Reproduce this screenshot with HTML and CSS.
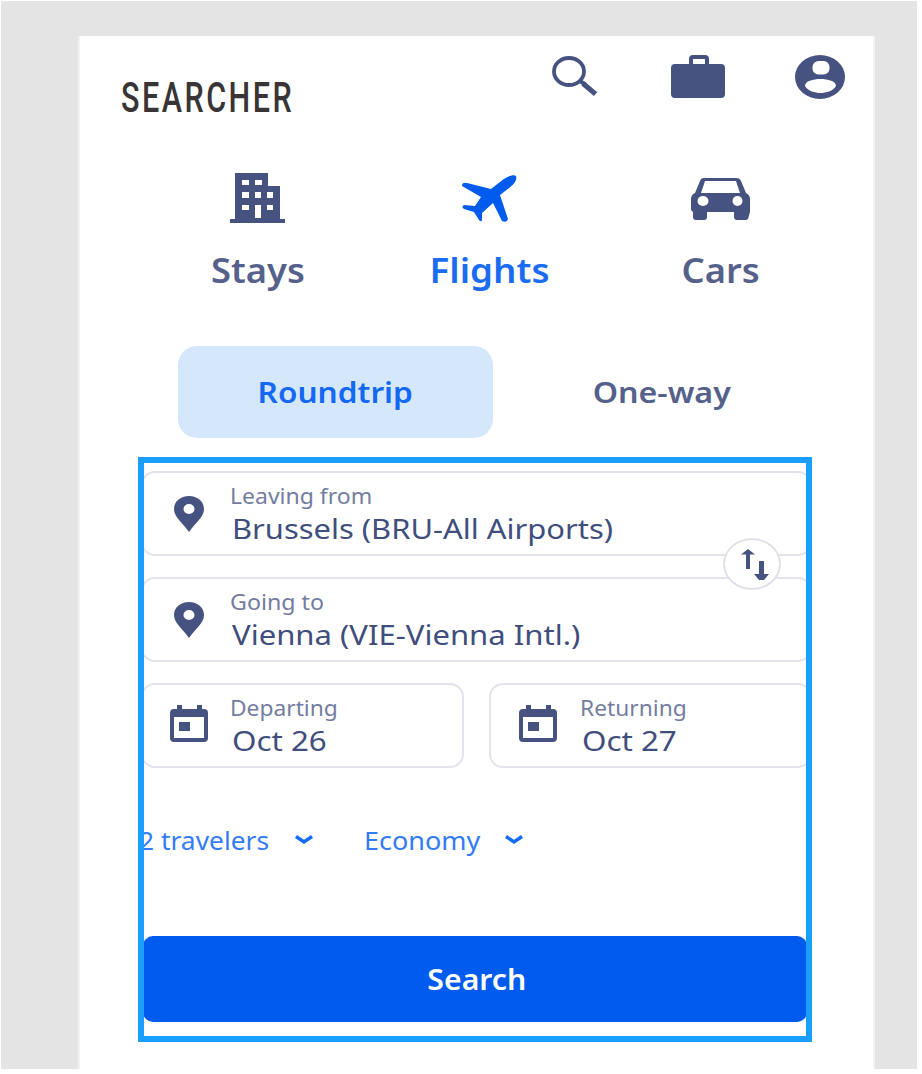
FILE: index.html
```html
<!DOCTYPE html>
<html lang="en">
<head>
<meta charset="utf-8">
<title>Searcher</title>
<link rel="stylesheet" href="styles.css">
</head>
<body>
<div class="canvas">
<main class="card">
  <header class="top">
    <div class="logo"><span>SEARCHER</span></div>
    <nav class="actions">
      <svg class="i-search" viewBox="0 0 45 41" preserveAspectRatio="none" fill="none" stroke="currentColor"><ellipse cx="17" cy="15.500" rx="15" ry="13.500" stroke-width="3.800"/><path d="M28 25l6 4" stroke-width="4"/><path d="M31 27.500l12.500 10.500" stroke-width="5"/></svg>
      <svg class="i-bag" viewBox="0 0 54 43"><path fill="currentColor" fill-rule="evenodd" d="M4 9H18V4Q18 0 22 0H34Q38 0 38 4V9H50Q54 9 54 13V39Q54 43 50 43H4Q0 43 0 39V13Q0 9 4 9ZM22 9H34V4H22Z"/></svg>
      <svg class="i-user" viewBox="0 0 50 44"><ellipse cx="25" cy="22" rx="25" ry="22" fill="currentColor"/><rect x="17.500" y="6" width="17" height="13.500" rx="6" fill="#fff"/><path fill="#fff" d="M10 31C10 26 18 24 25.500 24S41 26 41 31C38 36 31 38 25.500 38S13 36 10 31Z"/></svg>
    </nav>
  </header>
  <nav class="tabs">
    <a class="tab"><span class="pic"><svg width="55" height="53" viewBox="0 0 55 53"><path fill="currentColor" fill-rule="evenodd" d="M5 1H38V14H50V47H55V51H0V47H5ZM12 8V13H19V8ZM25 8V13H32V8ZM12 20V26H19V20ZM25 20V26H31V20ZM37 20V26H43V20ZM12 33V38H19V33ZM37 33V38H43V33ZM25 33V46H31V33Z"/></svg></span><span class="lbl stays">Stays</span></a>
    <a class="tab on"><span class="pic"><svg width="55" height="47" viewBox="0 0 55 47"><path fill="currentColor" d="M54 1C51-1 44 2 38 7L29 14L5 8Q0 7 0 11L19 22L13 31L2 30Q-1 32 2 34L12 37L17 45Q20 48 20 44L20 38L31 28L40 46Q45 48 46 44L38 20L47 13Q56 6 54 1Z"/></svg></span><span class="lbl flights">Flights</span></a>
    <a class="tab"><span class="pic"><svg width="59" height="43" viewBox="0 0 59 43"><path fill="currentColor" fill-rule="evenodd" d="M13 1H45Q49 1 50 4L55 16Q59 18 59 22V35L57 42Q56 43 54 43H46Q43 43 43 40V35H16V40Q16 43 13 43H5Q2 43 2 40V35L0 33V21Q1 17 4 16L9 4Q10 1 13 1ZM14 4L10 16H49L45 4Z"/><ellipse cx="12" cy="24" rx="5.500" ry="5" fill="#fff"/><ellipse cx="46.500" cy="24" rx="5" ry="5" fill="#fff"/></svg></span><span class="lbl cars">Cars</span></a>
  </nav>
  <div class="trip">
    <button class="seg on"><span class="roundtrip">Roundtrip</span></button>
    <button class="seg"><span class="oneway">One-way</span></button>
  </div>
  <section class="frame">
    <div class="form">
      <div class="field">
        <svg class="pin" viewBox="0 0 30 36"><path fill="currentColor" fill-rule="evenodd" d="M15 0C6.500 0 0 5.500 0 13C0 21 8 26 15 36C22 26 30 21 30 13C30 5.500 23.500 0 15 0ZM15 8A5.500 5 0 1 1 15 18A5.500 5 0 1 1 15 8Z"/></svg>
        <div class="txt"><small class="w1">Leaving from</small><b class="w2">Brussels (BRU-All Airports)</b></div>
        <span class="swap"><svg width="30" height="32" viewBox="0 0 30 32" fill="none" stroke="currentColor"><path d="M8 21V3" stroke-width="4"/><path d="M1 6.500L8 1L15 6.500Z" fill="currentColor" stroke="none"/><path d="M21.500 13V27" stroke-width="5"/><path d="M14 26H29L24 32H19Z" fill="currentColor" stroke="none"/></svg></span>
      </div>
      <div class="field">
        <svg class="pin" viewBox="0 0 30 36"><path fill="currentColor" fill-rule="evenodd" d="M15 0C6.500 0 0 5.500 0 13C0 21 8 26 15 36C22 26 30 21 30 13C30 5.500 23.500 0 15 0ZM15 8A5.500 5 0 1 1 15 18A5.500 5 0 1 1 15 8Z"/></svg>
        <div class="txt"><small class="w3">Going to</small><b class="w4">Vienna (VIE-Vienna Intl.)</b></div>
      </div>
      <div class="dates">
        <div class="field">
          <svg class="cal" viewBox="0 0 38 37"><path fill="currentColor" fill-rule="evenodd" d="M4 4H7V0H12V4H27V0H32V4H34Q38 4 38 8V33Q38 37 34 37H4Q0 37 0 33V8Q0 4 4 4ZM4 12V33H34V12ZM9 17H20V26H9Z"/></svg>
          <div class="txt"><small class="w5">Departing</small><b class="w6">Oct 26</b></div>
        </div>
        <div class="field returning">
          <svg class="cal" viewBox="0 0 38 37"><path fill="currentColor" fill-rule="evenodd" d="M4 4H7V0H12V4H27V0H32V4H34Q38 4 38 8V33Q38 37 34 37H4Q0 37 0 33V8Q0 4 4 4ZM4 12V33H34V12ZM9 17H20V26H9Z"/></svg>
          <div class="txt"><small class="w7">Returning</small><b class="w8">Oct 27</b></div>
        </div>
      </div>
      <div class="options">
        <span class="opt first"><span class="w9">2 travelers</span></span>
        <svg class="chev" viewBox="0 0 18 10"><path d="M1 1.500L9 7L17 1.500" fill="none" stroke="currentColor" stroke-width="3.500"/></svg>
        <span class="opt second"><span class="w10">Economy</span></span>
        <svg class="chev" viewBox="0 0 18 10"><path d="M1 1.500L9 7L17 1.500" fill="none" stroke="currentColor" stroke-width="3.500"/></svg>
      </div>
      <button class="go"><span>Search</span></button>
    </div>
  </section>
</main>
</div>
</body>
</html>
```
FILE: styles.css
```css
* { box-sizing: border-box; }
body { margin: 0; padding: 1px; background: #fff; font-family: "Noto Sans", "Open Sans", sans-serif; color: #465381; }
svg { display: block; flex: none; }
button { font: inherit; color: inherit; border: 0; background: none; padding: 0; }
.canvas { width: 916px; height: 1068px; background: #e4e4e4; padding: 35px 0 0 77px; }
.card { width: 797px; height: 1033px; background: #fff; border: solid #f2f2f2; border-width: 0 2px; }
.top { display: flex; justify-content: space-between; height: 136px; padding: 19px 28px 0 41px; }
.logo { width: 180px; padding-top: 17px; font: 500 43px/50px Roboto, sans-serif; color: #393536; white-space: nowrap; }
.logo span { display: inline-block; letter-spacing: 3.5px; transform: scaleX(.71); transform-origin: left; }
.actions { display: flex; }
.i-search { width: 45px; height: 41px; margin: 1px 74px 0 0; }
.i-bag { width: 54px; height: 43px; margin-right: 70px; }
.i-user { width: 50px; height: 44px; }
.tabs { display: grid; grid-template-columns: repeat(3, 231.500px); padding-left: 62px; height: 174px; }
.tab { display: flex; flex-direction: column; align-items: center; }
.pic { height: 52px; display: flex; align-items: center; }
.lbl { margin-top: 22px; font-weight: 600; font-size: 34px; line-height: 48px; color: #56618b; transform: scaleX(1.07); }
.tab.on .lbl { color: #1a6cf3; transform: scaleX(1.08); }
.on { color: #1468f3; }
.tab.on { color: #005bee; }
.trip { display: grid; grid-template-columns: 315px 340px; margin-left: 98px; height: 92px; }
.seg { font-weight: 600; font-size: 29px; line-height: 40px; border-radius: 19px; color: #56618b; }
.seg.on { background: #d5e7fb; color: #1468f3; }
.seg span, .lbl, .go span { display: inline-block; white-space: nowrap; }
.roundtrip { transform: scaleX(1.09); }
.oneway { transform: translateX(-1.5px) scaleX(1.11); }
.frame { margin: 19px 0 0 58px; width: 674px; height: 585px; border: 6px solid #1b9fff; overflow: hidden; }
.form { padding-top: 8px; margin: 0 -6px 0 -3px; }
.field { position: relative; height: 85px; border: 2px solid #e2e3eb; border-radius: 14px; margin-bottom: 21px; display: flex; padding-left: 31px; background: #fff; }
.pin { width: 30px; height: 36px; margin: 23px 26px 0 0; }
.cal { width: 38px; height: 37px; margin: 20px 22px 0 -4px; }
.txt { display: flex; flex-direction: column; align-items: flex-start; white-space: nowrap; }
.txt small { font-size: 22px; line-height: 30px; margin-top: 7px; color: #747da1; transform-origin: left; }
.txt b { font-weight: 400; font-size: 27px; line-height: 36px; margin: 1px 0 0 2px; color: #3f4e7d; transform-origin: left; }
.w1 { transform: scaleX(1.045); }
.w2 { transform: scaleX(1.145); }
.w3 { transform: scaleX(1.055); }
.w4 { transform: scaleX(1.15); }
.w5, .w7 { transform: scaleX(1.035); }
.w6, .w8 { transform: scaleX(1.16); }
.returning { padding-left: 32px; }
.returning .txt { padding-left: 1px; }
.swap { position: absolute; right: 29px; top: 65px; width: 58px; height: 52px; z-index: 1; border: 2px solid #dfe0e9; border-radius: 50%; background: #fff; display: flex; justify-content: center; align-items: center; padding-left: 6px; }
.dates { display: grid; grid-template-columns: 323px 323px; column-gap: 25px; }
.dates .field { margin-bottom: 0; }
.options { display: flex; height: 168px; padding-top: 54px; color: #347cf5; font-size: 25px; line-height: 36px; white-space: nowrap; }
.opt { display: block; }
.opt span { display: inline-block; transform-origin: left; }
.opt .w9 { transform: scaleX(1.055); }
.opt .w10 { transform: scaleX(1.08); }
.first { width: 155px; margin-left: -2px; }
.second { width: 141px; margin-left: 51px; }
.chev { width: 18px; height: 10px; margin-top: 13px; margin-left: 1px; color: #146bf5; }
.second + .chev { margin-left: 0; }
.go { display: block; width: 664px; height: 86px; margin-left: 2px; background: #005bee; color: #fff; border-radius: 10px; font-weight: 600; font-size: 28px; line-height: 38px; }
.go span { transform: translateX(2px) scaleX(1.08); }
```
